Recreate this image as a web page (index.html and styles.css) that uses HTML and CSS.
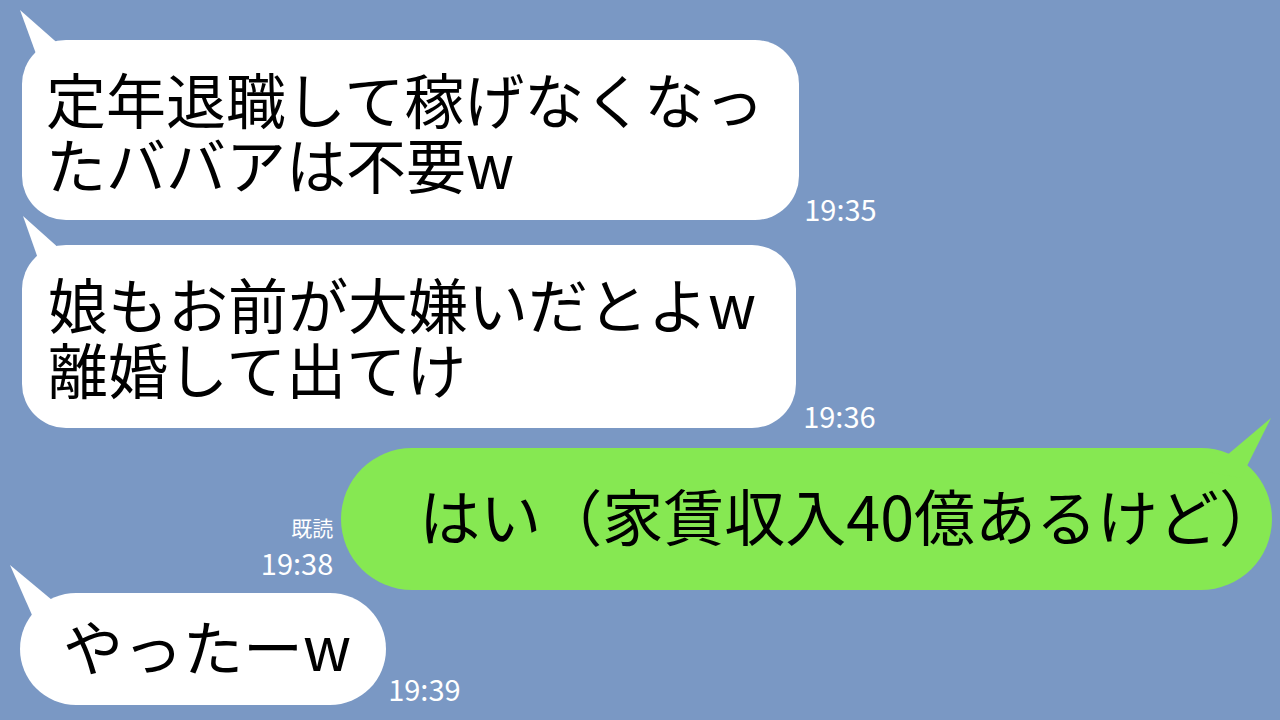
FILE: index.html
```html
<!DOCTYPE html>
<html lang="ja">
<head>
<meta charset="utf-8">
<link rel="stylesheet" href="styles.css">
</head>
<body>
<div class="chat">
  <div class="row row-1">
    <div class="bubble white b1">
      <svg class="tail tail-left" width="1" height="1"><polygon points="-2,-30 17,22 57,22" /></svg>
      <span class="text">定年退職して稼げなくなっ<br>たババアは不要w</span>
    </div>
    <div class="meta"><span class="time">19:35</span></div>
  </div>
  <div class="row row-2">
    <div class="bubble white b2">
      <svg class="tail tail-left" width="1" height="1"><polygon points="1,-29 19,22 58,22" /></svg>
      <span class="text">娘もお前が大嫌いだとよw<br>離婚して出てけ</span>
    </div>
    <div class="meta"><span class="time">19:36</span></div>
  </div>
  <div class="row row-3">
    <div class="meta meta-right"><span class="read">既読</span><span class="time">19:38</span></div>
    <div class="bubble green b3">
      <svg class="tail tail-right" width="1" height="1"><polygon points="0,-30 -64,24 -30,30" /></svg>
      <span class="text">はい（家賃収入40億あるけど）</span>
    </div>
  </div>
  <div class="row row-4">
    <div class="bubble white b4">
      <svg class="tail tail-left" width="1" height="1"><polygon points="-10,-28 12,22 50,22" /></svg>
      <span class="text">やったーw</span>
    </div>
    <div class="meta"><span class="time">19:39</span></div>
  </div>
</div>
</body>
</html>
```
FILE: styles.css
```css
html, body {
  margin: 0;
  padding: 0;
  width: 1280px;
  height: 720px;
  overflow: hidden;
  background: #7a98c4;
  font-family: "Noto Sans CJK JP", "Noto Sans", sans-serif;
}

.chat {
  display: flex;
  flex-direction: column;
  padding-top: 40px;
}

.row {
  display: flex;
  align-items: flex-end;
}

.row-1 { padding-left: 22px; gap: 5px; }
.row-2 { padding-left: 22px; gap: 7px; margin-top: 25px; }
.row-3 { justify-content: flex-end; padding-right: 8px; gap: 8px; margin-top: 20px; }
.row-4 { padding-left: 20px; gap: 2px; margin-top: 3px; }

.bubble {
  position: relative;
  color: #000;
  font-size: 60px;
  line-height: 65px;
  white-space: nowrap;
}

.bubble.white { background: #fff; }
.bubble.green { background: #86e852; }

.text { position: relative; }

.b1 {
  border-radius: 44px;
  padding: 25px 35px 25px 24px;
}

.b2 {
  border-radius: 44px;
  padding: 25px 40px 28px 26px;
}

.b3 {
  border-radius: 71px;
  font-size: 61px;
  padding: 34px 0 43px 78px;
}

.b3 .text { margin-right: -8px; }

.b4 {
  border-radius: 56px;
  padding: 19px 35px 28px 43px;
}

.tail {
  position: absolute;
  top: 0;
  overflow: visible;
}

.tail-left { left: 0; }
.tail-right { right: 0; }

.white .tail polygon { fill: #fff; }
.green .tail polygon { fill: #86e852; }

.meta {
  display: flex;
  flex-direction: column;
  color: #fff;
}

.meta-right {
  align-items: flex-end;
  padding-bottom: 11px;
}

.time {
  font-size: 29px;
  line-height: 34px;
}

.read {
  font-size: 21px;
  line-height: 28px;
  margin-bottom: 4px;
}

.row-1 .meta { margin-bottom: -5px; }
.row-2 .meta { margin-bottom: -4px; }
.row-4 .meta { margin-bottom: 0; }
```
